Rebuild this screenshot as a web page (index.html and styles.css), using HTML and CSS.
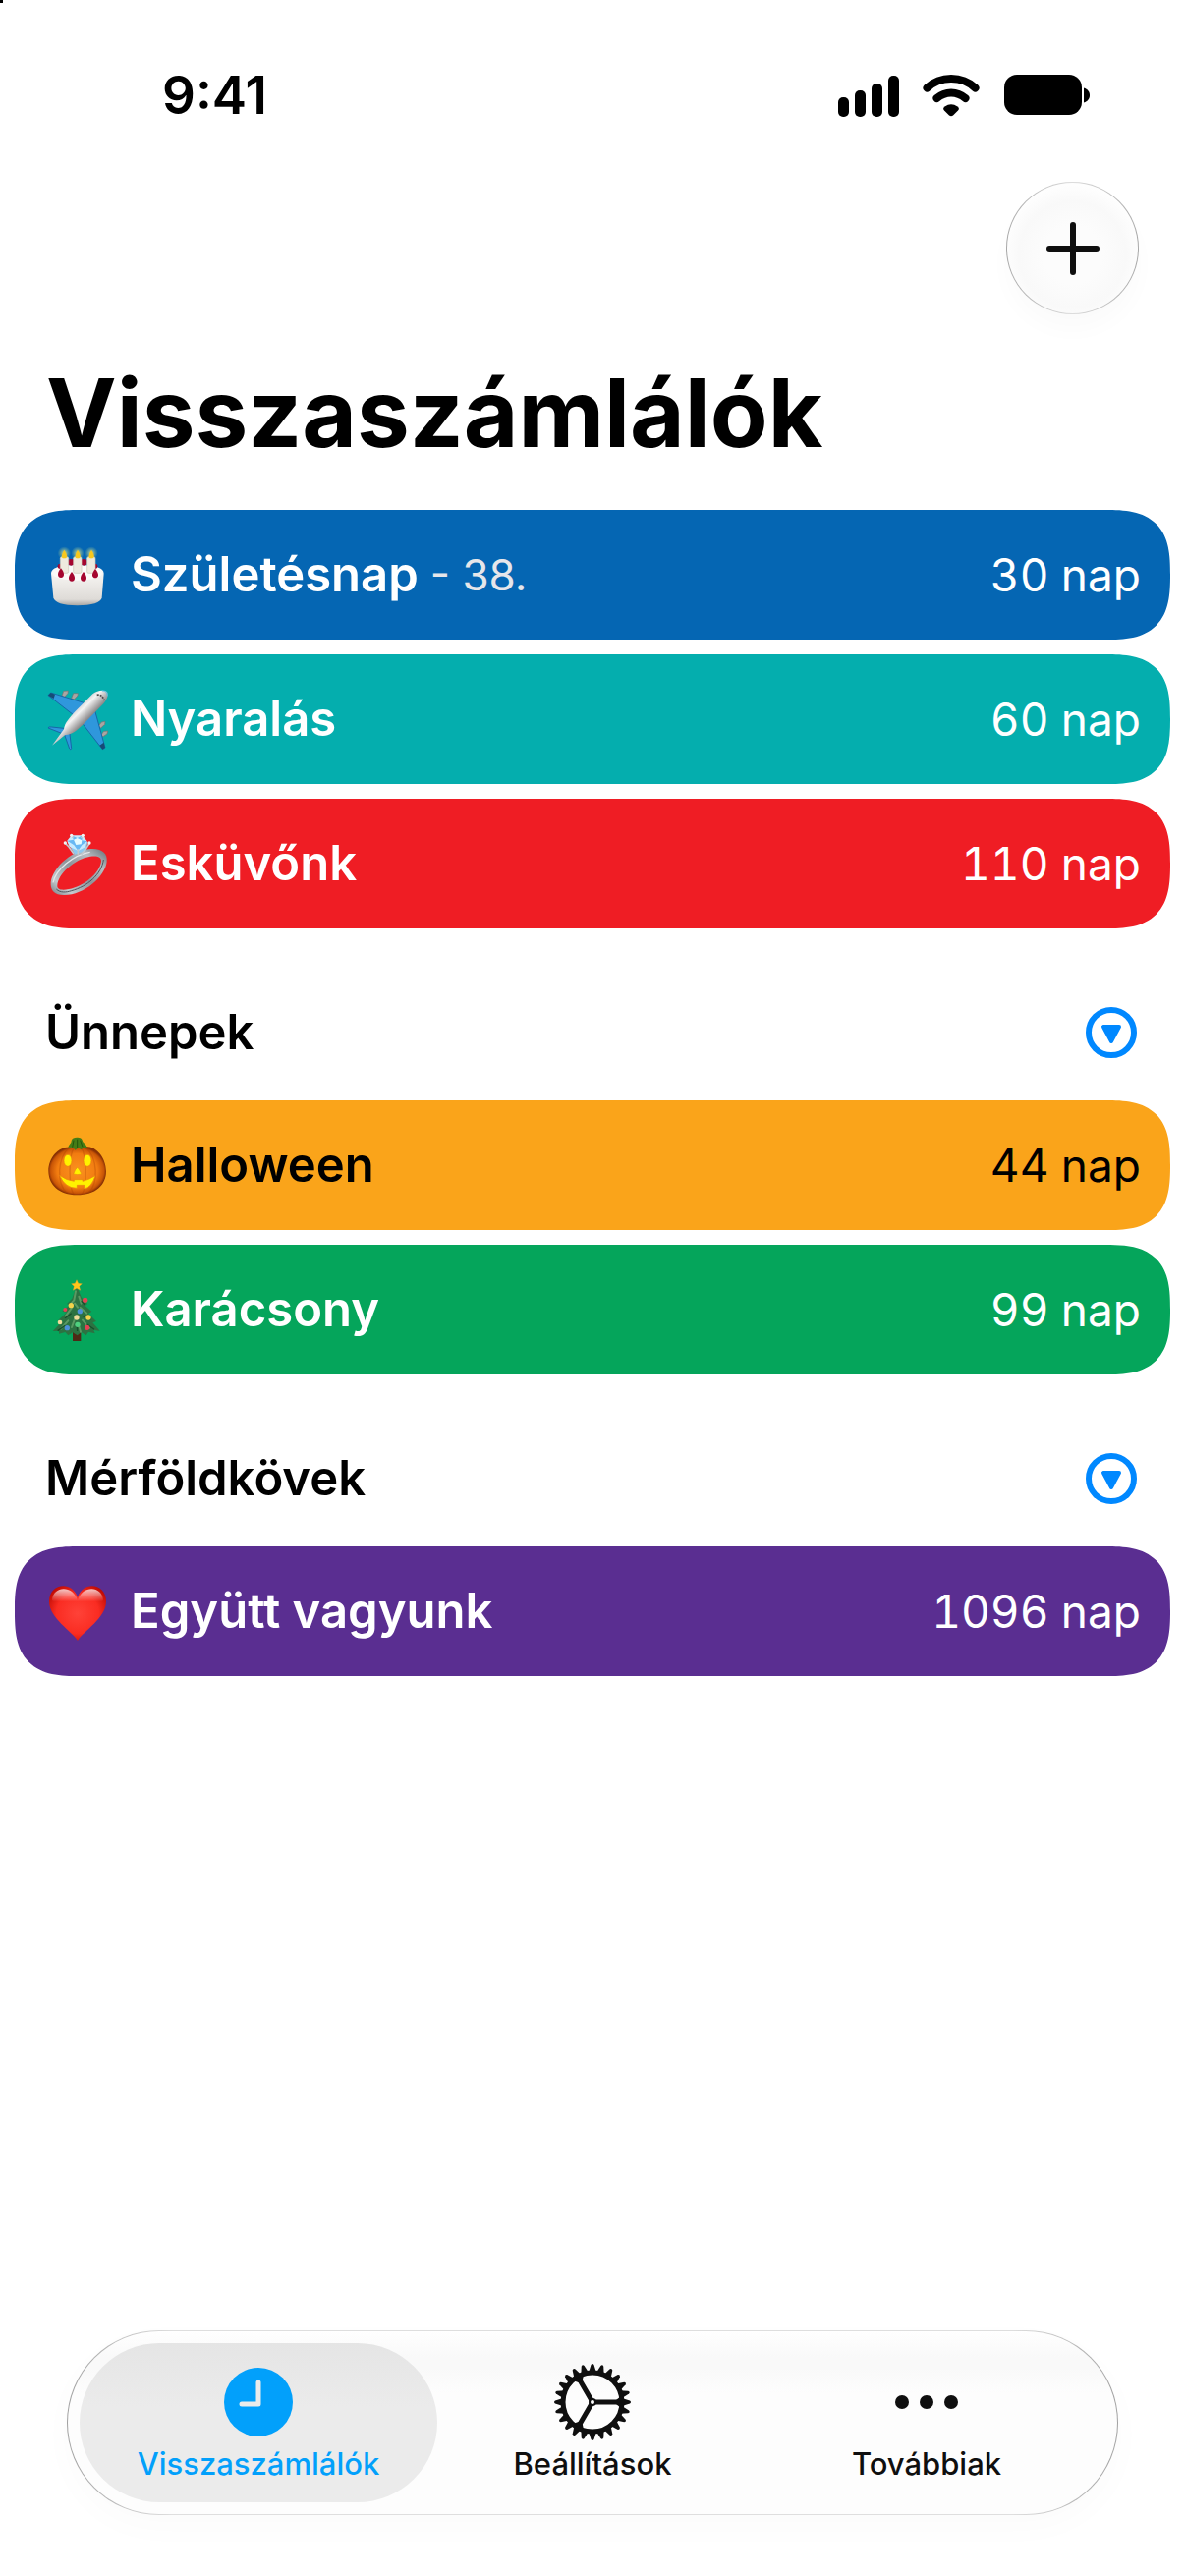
FILE: index.html
```html
<!DOCTYPE html>
<html lang="hu">
<head>
<meta charset="utf-8">
<meta name="viewport" content="width=device-width, initial-scale=1">
<title>Visszaszámlálók</title>
<link rel="stylesheet" href="styles.css">
</head>
<body>
<header class="status-bar">
  <time class="clock">9:41</time>
  <div class="status-icons">
    <svg width="62" height="44" viewBox="0 0 62 44" aria-hidden="true">
      <rect x="0" y="24" width="11" height="20" rx="5"/>
      <rect x="17" y="17" width="11" height="27" rx="5"/>
      <rect x="34" y="10" width="11" height="34" rx="5"/>
      <rect x="51" y="2" width="11" height="42" rx="5"/>
    </svg>
    <svg width="58" height="44" viewBox="0 0 58 44" aria-hidden="true">
      <path d="M4.500 14.500C18 1.800 40 1.800 53.500 14.500" fill="none" stroke="#000" stroke-width="8" stroke-linecap="round"/>
      <path d="M14.500 25C23 17.500 35 17.500 43.500 25" fill="none" stroke="#000" stroke-width="8" stroke-linecap="round"/>
      <path d="M22.500 33.500Q29 29 35.500 33.500Q38 35.500 36 37.500L31 42.500Q29 44 27 42.500L22 37.500Q20 35.500 22.500 33.500Z"/>
    </svg>
    <svg width="88" height="44" viewBox="0 0 88 44" aria-hidden="true">
      <rect x="1" y="1" width="79" height="41" rx="13"/>
      <path d="M82 14.500C90 16.500 90 27.500 82 29.500Z"/>
    </svg>
  </div>
</header>

<main class="content">
  <div class="toolbar">
    <button class="add-button" type="button" aria-label="Új visszaszámláló">
      <svg width="54" height="54" viewBox="0 0 54 54" aria-hidden="true"><path d="M27 3v48M3 27h48" fill="none" stroke="#0f0f0f" stroke-width="6" stroke-linecap="round"/></svg>
    </button>
  </div>
  <h1 class="title">Visszaszámlálók</h1>

  <ul class="cards">
    <li class="card card-blue">
      <svg class="emoji" viewBox="24 27 186 186" aria-hidden="true">
        <defs>
          <linearGradient id="cake" x1="0" x2="0" y1="0" y2="1"><stop offset="0" stop-color="#fff"/><stop offset=".35" stop-color="#f1efec"/><stop offset=".85" stop-color="#dedbd7"/><stop offset="1" stop-color="#a8a6a3"/></linearGradient>
          <radialGradient id="glow"><stop offset="0" stop-color="#fff38a" stop-opacity=".8"/><stop offset="1" stop-color="#bfe08a" stop-opacity="0"/></radialGradient>
        </defs>
        <path d="M36 116C36 100 60 90 116 90S197 100 197 116L191 190C189 205 160 214 116 214S46 205 43 190Z" fill="url(#cake)"/>
        <ellipse cx="116" cy="115" rx="76" ry="22" fill="#fbfaf8"/>
        <g fill="#a5062f"><circle cx="97" cy="82" r="10"/><circle cx="136" cy="82" r="10"/><circle cx="64" cy="94" r="8"/><circle cx="170" cy="94" r="8"/></g>
        <g fill="#eeeade" stroke="#cfc9b8" stroke-width="2"><rect x="64" y="65" width="25" height="50" rx="5"/><rect x="104" y="65" width="25" height="50" rx="5"/><rect x="146" y="65" width="25" height="50" rx="5"/></g>
        <g fill="url(#glow)"><circle cx="76" cy="54" r="20"/><circle cx="117" cy="54" r="20"/><circle cx="159" cy="54" r="20"/></g>
        <g fill="#f7c81e"><path d="M76 44C90 64 84 70 76 70S64 64 76 44Z"/><path d="M117 44C131 64 125 70 117 70S105 64 117 44Z"/><path d="M159 44C173 64 167 70 159 70S147 64 159 44Z"/></g>
        <g fill="#a5062f"><path d="M66 100C80 116 76 129 66 129S52 116 66 100Z"/><path d="M99 111C113 127 109 140 99 140S85 127 99 111Z"/><path d="M135 111C149 127 145 140 135 140S121 127 135 111Z"/><path d="M171 102C185 118 181 130 171 130S157 118 171 102Z"/></g>
      </svg>
      <span class="name">Születésnap</span>
      <span class="detail">- 38.</span>
      <span class="days">30 nap</span>
    </li>
    <li class="card card-teal">
      <svg class="emoji" viewBox="24 468 186 186" aria-hidden="true">
        <defs>
          <linearGradient id="hull" gradientUnits="userSpaceOnUse" x1="112" y1="520" x2="150" y2="558"><stop offset="0" stop-color="#c4c4c7"/><stop offset=".4" stop-color="#f4f4f4"/><stop offset="1" stop-color="#8d8a8b"/></linearGradient>
        </defs>
        <g fill="#aaa5a3" stroke="#77706e" stroke-width="2"><path d="M69 490L74 475L88 474L87 482L76 494Z"/><path d="M98 497L104 482L118 482L117 489L106 501Z"/><path d="M180 583L190 570L201 568L200 577L188 588Z"/><path d="M188 610L197 598L209 597L207 606L195 614Z"/></g>
        <g fill="#2f97dc" stroke="#1668a8" stroke-width="3" stroke-linejoin="round">
          <path d="M27 488L35 480L155 517L122 562Z"/>
          <path d="M168 528L201 648L193 653L122 562Z"/>
          <path d="M27 588Q27 583 38 585L84 590L73 606Z"/>
          <path d="M76 606L92 598L98 650Q96 657 92 651Z"/>
        </g>
        <path d="M27 488L35 480L48 485L44 498ZM201 648L193 653L184 641L197 632Z" fill="#174a75"/>
        <path d="M39 641L75 592C77 573 93 556 109 538L163 484C178 471 201 470 208 479C212 491 203 507 193 517L132 579C116 594 102 608 79 609Z" fill="url(#hull)"/>
        <path d="M176 487Q191 484 199 504" fill="none" stroke="#504b4d" stroke-width="5" stroke-dasharray="6 3"/>
        <path d="M192 474Q207 472 208 490" fill="none" stroke="#58bde9" stroke-width="3"/>
      </svg>
      <span class="name">Nyaralás</span>
      <span class="days">60 nap</span>
    </li>
    <li class="card card-red">
      <svg class="emoji" viewBox="24 909 186 186" aria-hidden="true">
        <defs>
          <linearGradient id="band" x1="0" x2="1" y1="1" y2="0"><stop offset="0" stop-color="#747b81"/><stop offset=".2" stop-color="#c5cace"/><stop offset=".5" stop-color="#8d959b"/><stop offset=".75" stop-color="#b8bec3"/><stop offset="1" stop-color="#646c72"/></linearGradient>
        </defs>
        <path fill="url(#band)" fill-rule="evenodd" d="M35 1067C33 1025 92 961 157 957C193 955 209 972 206 996C201 1043 134 1100 74 1098C47 1097 36 1084 35 1067ZM55 1068C53 1081 68 1085 90 1080C134 1072 185 1032 189 995C190 982 177 977 156 980C107 988 57 1034 55 1068Z"/>
        <path d="M52 1080C64 1092 82 1090 98 1085C146 1072 190 1036 196 990" fill="none" stroke="#4d565d" stroke-width="3"/>
        <path d="M42 1060C50 1022 102 975 155 967" fill="none" stroke="#e4e8ea" stroke-width="4"/>
        <path d="M86 936L108 974L142 963L148 936Z" fill="#8bc9f0"/>
        <path d="M85 932L98 916H132L146 934L140 952L118 963L92 950Z" fill="#c7ebff"/>
        <path d="M85 932L105 929L98 916L116 924L132 916L130 931L146 934L130 946L118 963L106 946Z" fill="#68b8f3"/>
        <path d="M105 929L116 924L130 931L128 943L112 945Z" fill="#e6fbff"/>
        <path d="M78 939L90 951L105 972M154 939L144 955L128 974M98 917L104 923M133 917L128 924M118 958V974" fill="none" stroke="#c1cace" stroke-width="5"/>
        <g fill="#eef4f5"><circle cx="98" cy="916" r="5"/><circle cx="133" cy="916" r="5"/><circle cx="79" cy="939" r="5"/><circle cx="153" cy="939" r="5"/></g>
      </svg>
      <span class="name">Esküvőnk</span>
      <span class="days">110 nap</span>
    </li>
  </ul>

  <div class="section-head">
    <h2 class="section-title">Ünnepek</h2>
    <button class="toggle" type="button" aria-label="Ünnepek összecsukása">
      <svg width="52" height="52" viewBox="0 0 52 52" aria-hidden="true"><circle cx="26" cy="26" r="23" fill="none" stroke="#08f" stroke-width="6"/><path d="M18 20H34L26 35Z" fill="#08f" stroke="#08f" stroke-width="4" stroke-linejoin="round"/></svg>
    </button>
  </div>
  <ul class="cards">
    <li class="card card-orange">
      <svg class="emoji" viewBox="24 30 186 186" aria-hidden="true">
        <defs>
          <radialGradient id="pumpkin"><stop offset="0" stop-color="#fb9220"/><stop offset=".7" stop-color="#f27c10"/><stop offset=".92" stop-color="#c95506"/><stop offset="1" stop-color="#8a3204"/></radialGradient>
        </defs>
        <path d="M98 68C63 62 27 98 28 142C29 184 60 214 115 214C172 214 204 184 204 141C203 98 171 60 135 67Z" fill="url(#pumpkin)"/>
        <path d="M92 70C55 100 52 178 84 208M142 70C178 100 182 178 150 208M106 70C88 95 90 190 105 212M128 70C146 95 146 190 130 212" fill="none" stroke="#a53e04" stroke-opacity=".3" stroke-width="4"/>
        <path d="M88 68C92 58 98 56 98 48C100 40 110 37 121 39C133 40 130 51 136 55C143 60 143 65 148 70L136 68L128 76L119 70L110 77L103 69Z" fill="#457c16"/>
        <path d="M105 47L101 68M116 44V71M125 47L132 67" stroke="#24550c" stroke-width="3" fill="none"/>
        <g fill="#fff200" stroke="#e8850f" stroke-width="2"><ellipse cx="87" cy="109" rx="12" ry="18"/><ellipse cx="147" cy="109" rx="12" ry="18"/><path d="M116 129Q122 135 129 150Q117 154 104 150Q109 135 116 129Z"/><path d="M62 154Q84 170 106 172V167H132V172Q151 168 171 155Q160 191 137 195V184H115V193Q78 193 62 154Z"/></g>
      </svg>
      <span class="name">Halloween</span>
      <span class="days">44 nap</span>
    </li>
    <li class="card card-green">
      <svg class="emoji" viewBox="24 471 186 186" aria-hidden="true">
        <rect x="102" y="626" width="25" height="34" fill="#4e2916"/>
        <path d="M114 491L100 530L84 547L94 549L70 569L84 572L58 596L72 598L41 630L60 629L60 638L79 633L88 643L102 634L116 643L128 633L143 643L150 632L170 637L166 627L185 629L163 604L174 600L150 576L160 570L140 552L147 546L128 526Z" fill="#2c7242"/>
        <path d="M111 508L106 535L92 550M121 524L128 545M98 560L80 584M125 558L145 575M88 598L66 623M111 585L99 618M132 596L153 620M121 615L126 632M108 545L117 557" fill="none" stroke="#5a9a62" stroke-width="6" stroke-linecap="round"/>
        <path d="M128 538L140 550M98 575L78 590M133 584L158 594M80 612L56 629M145 608L168 625M114 604L116 630" fill="none" stroke="#174f2b" stroke-width="4"/>
        <path d="M114 473L119 484L130 485L122 493L125 505L114 499L103 505L106 493L98 485L109 484Z" fill="#ffc61a" stroke="#ef9820" stroke-width="1"/>
        <g fill="#e54253"><circle cx="140" cy="535" r="8"/><circle cx="79" cy="564" r="6"/><circle cx="146" cy="619" r="8"/></g>
        <g fill="#f3d34c"><circle cx="97" cy="551" r="8"/><circle cx="150" cy="588" r="8"/></g>
        <g fill="#f0dc9a"><circle cx="114" cy="588" r="8"/><circle cx="63" cy="603" r="7"/></g>
        <g fill="#4b90d8"><circle cx="124" cy="569" r="8"/><circle cx="85" cy="620" r="8"/></g>
        <circle cx="117" cy="610" r="8" fill="#4ed07e"/>
      </svg>
      <span class="name">Karácsony</span>
      <span class="days">99 nap</span>
    </li>
  </ul>

  <div class="section-head">
    <h2 class="section-title">Mérföldkövek</h2>
    <button class="toggle" type="button" aria-label="Mérföldkövek összecsukása">
      <svg width="52" height="52" viewBox="0 0 52 52" aria-hidden="true"><circle cx="26" cy="26" r="23" fill="none" stroke="#08f" stroke-width="6"/><path d="M18 20H34L26 35Z" fill="#08f" stroke="#08f" stroke-width="4" stroke-linejoin="round"/></svg>
    </button>
  </div>
  <ul class="cards">
    <li class="card card-purple">
      <svg class="emoji" viewBox="0 0 62 62" aria-hidden="true">
        <defs>
          <radialGradient id="heart" cx=".5" cy=".5" r=".62"><stop offset="0" stop-color="#ff4238"/><stop offset=".6" stop-color="#fa2c22"/><stop offset="1" stop-color="#b90700"/></radialGradient>
          <linearGradient id="shine" x1="0" x2="0" y1="0" y2="1"><stop offset="0" stop-color="#fff" stop-opacity=".75"/><stop offset=".7" stop-color="#fff" stop-opacity="0"/></linearGradient>
        </defs>
        <path d="M31 61C25 51 2 38 2 21C2 3 25 -1 31 17C37 -1 60 3 60 21C60 38 37 51 31 61Z" fill="url(#heart)"/>
        <path d="M5 20C6 5 26 4 31 20C36 4 56 5 57 20C50 29 12 29 5 20Z" fill="url(#shine)"/>
      </svg>
      <span class="name">Együtt vagyunk</span>
      <span class="days">1096 nap</span>
    </li>
  </ul>
</main>

<nav class="tab-bar" aria-label="Fő navigáció">
  <a class="tab tab-active" href="#visszaszamlalok" aria-current="page">
    <svg width="80" height="80" viewBox="0 0 80 80" aria-hidden="true"><circle cx="40" cy="40" r="35" fill="#02a0fb"/><path d="M40 20V42H23" fill="none" stroke="#ebebeb" stroke-width="5" stroke-linecap="round" stroke-linejoin="round"/></svg>
    <span>Visszaszámlálók</span>
  </a>
  <a class="tab" href="#beallitasok">
    <svg width="80" height="80" viewBox="-40 -40 80 80" aria-hidden="true">
      <defs><path id="tooth" d="M-4 -30L-1.500 -38Q0 -40 1.500 -38L4 -30Z"/><g id="teeth"><use href="#tooth"/><use href="#tooth" transform="rotate(15)"/><use href="#tooth" transform="rotate(30)"/><use href="#tooth" transform="rotate(45)"/><use href="#tooth" transform="rotate(60)"/><use href="#tooth" transform="rotate(75)"/></g></defs>
      <g fill="#0f0f0f">
        <use href="#teeth"/><use href="#teeth" transform="rotate(90)"/><use href="#teeth" transform="rotate(180)"/><use href="#teeth" transform="rotate(270)"/>
      </g>
      <circle r="30" fill="none" stroke="#0f0f0f" stroke-width="5"/>
      <path d="M0 0H29M0 0L-14.500 -25M0 0L-14.500 25" stroke="#0f0f0f" stroke-width="5" fill="none"/>
      <path d="M24 -2L29 -6V6L24 2ZM-10.300 -21.800L-9 -28L-20 -22L-13.700 -19.800ZM-10.300 21.800L-9 28L-20 22L-13.700 19.800Z" fill="#0f0f0f"/>
      <circle r="4" fill="#0f0f0f"/><circle r="2" fill="#fff"/>
    </svg>
    <span>Beállítások</span>
  </a>
  <a class="tab" href="#tovabbiak">
    <svg width="80" height="80" viewBox="0 0 80 80" aria-hidden="true"><g fill="#0f0f0f"><circle cx="15" cy="40" r="7"/><circle cx="40" cy="40" r="7"/><circle cx="65" cy="40" r="7"/></g></svg>
    <span>Továbbiak</span>
  </a>
</nav>
</body>
</html>
```
FILE: styles.css
```css
*, *::before, *::after {
  box-sizing: border-box;
}

body {
  margin: 0;
  min-height: 100vh;
  display: flex;
  flex-direction: column;
  font-family: Inter, "Liberation Sans", sans-serif;
  color: #000;
  background: linear-gradient(#000, #000) 0 0 / 3px 3px no-repeat #fff;
}

svg {
  display: block;
  flex: none;
}

button {
  padding: 0;
  border: 0;
  background: none;
  cursor: pointer;
}

.status-bar {
  display: flex;
  align-items: center;
  justify-content: space-between;
  padding: 75px 97px 0 165px;
}

.clock {
  font-size: 53px;
  font-weight: 600;
  line-height: 44px;
}

.status-icons {
  display: flex;
  gap: 24px;
}

.content {
  padding: 66px 15px 62px;
}

.toolbar {
  display: flex;
  justify-content: flex-end;
  padding-right: 32px;
}

.add-button {
  display: grid;
  place-items: center;
  width: 135px;
  height: 135px;
  border: 1px solid transparent;
  border-radius: 50%;
  background:
    radial-gradient(circle at 50% 55%, #fcfcfc 30%, #f9f9f9 55%, #fefefe 72%) padding-box,
    linear-gradient(90deg, #a8a8a8, #dcdcdc 50%, #a8a8a8) border-box;
  box-shadow: 0 16px 24px rgba(0, 0, 0, 0.02);
}

.title {
  margin: 40px 32px 39px;
  font-size: 96px;
  font-weight: 700;
  line-height: 120px;
}

.cards {
  display: grid;
  gap: 15px;
  margin: 0;
  padding: 0;
  list-style: none;
}

.card {
  display: flex;
  align-items: center;
  min-height: 132px;
  padding: 0 30px 0 33px;
  border-radius: 66px;
  corner-shape: superellipse(1.5);
  color: #fff;
}

.card-blue { background: #0566b3; }
.card-teal { background: #04aeae; }
.card-red { background: #ef1d24; }
.card-orange { background: #faa41a; color: #000; }
.card-green { background: #05a55b; }
.card-purple { background: #5a2e91; }

.emoji {
  width: 62px;
  height: 62px;
  margin-right: 23px;
  overflow: visible;
}

.name,
.section-title {
  font-size: 49px;
  font-weight: 600;
  line-height: 60px;
}

.detail {
  margin-left: 12px;
  font-size: 44px;
  font-weight: 400;
  line-height: 60px;
  color: #e6e6ea;
}

.days {
  margin-left: auto;
  font-size: 46px;
  font-variant-numeric: tabular-nums;
  line-height: 60px;
}

.section-head {
  display: flex;
  align-items: center;
  justify-content: space-between;
  padding: 76px 34px 39px 31px;
}

.section-title {
  margin: 0;
}

.tab-bar {
  display: grid;
  grid-template-columns: repeat(3, 1fr);
  margin: auto 68px 62px;
  padding: 12px 24px;
  border: 1px solid transparent;
  border-radius: 94px;
  background:
    linear-gradient(#fff, #f9f9f9 14%, #f9f9f9 20%, #fdfdfd 34%, #fdfdfd) padding-box,
    linear-gradient(90deg, #a0a0a0, #dedede 10%, #dedede 90%, #a0a0a0) border-box;
  box-shadow: 0 12px 36px rgba(0, 0, 0, 0.02);
}

.tab {
  display: flex;
  flex-direction: column;
  align-items: center;
  gap: 3px;
  height: 162px;
  padding-top: 20px;
  font-size: 31px;
  font-weight: 500;
  line-height: 40px;
  color: #0f0f0f;
  text-decoration: none;
}

.tab-active {
  margin: 0 -12px;
  border-radius: 81px;
  background: linear-gradient(#e5e5e5, #ebebeb 40%);
  color: #02a0fb;
}
```
